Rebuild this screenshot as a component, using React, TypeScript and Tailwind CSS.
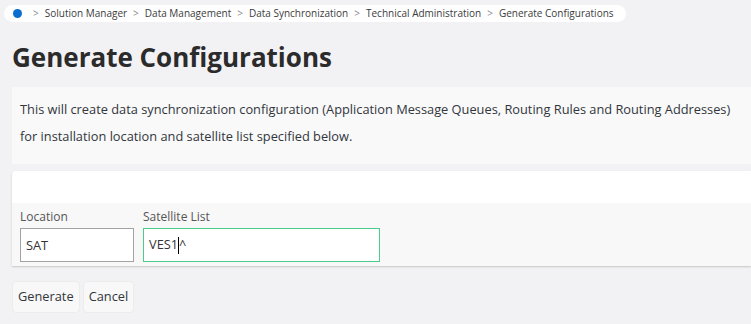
export default function App() {
  const crumbs = [
    "Solution Manager",
    "Data Management",
    "Data Synchronization",
    "Technical Administration",
    "Generate Configurations",
  ];

  return (
    <main className="h-[324px] w-[751px] overflow-hidden bg-[#f2f1f4] pl-[12px] font-['Open_Sans',sans-serif] text-[#32363a]">
      <nav className="ml-[-8px] mt-[5px] flex h-[17px] w-[622px] items-center whitespace-nowrap rounded-full bg-white pl-[9px] text-[10px] text-[#3b3b3b]">
        <span className="mr-[5px] h-[9px] w-[9px] shrink-0 rounded-full bg-[#0a6ed1]" />
        {crumbs.map((c) => (
          <span key={c} className="flex items-center">
            <span className="mx-[6px] text-[#8a8a8a]">&gt;</span>
            <span>{c}</span>
          </span>
        ))}
      </nav>

      <h1 className="mt-[19px] h-[46px] text-[26px] font-bold leading-[32px] text-[#2b2b2b]">
        Generate Configurations
      </h1>

      <section className="h-[77px] bg-[#f9f9fa] px-[8px] pt-[9px] text-[12.8px] leading-[27px]">
        <p>
          This will create data synchronization configuration (Application Message Queues, Routing Rules and Routing
          Addresses)
          <br />
          for installation location and satellite list specified below.
        </p>
      </section>

      <section className="mt-[7px] overflow-hidden rounded-tl-[4px] bg-white shadow-[0_1px_2px_rgba(0,0,0,0.18)]">
        <div className="h-[32px]" />
        <div className="flex h-[63px] gap-[9px] bg-[#f8f8f8] px-[8px] pt-[5px]">
          <div className="flex flex-col">
            <label className="text-[12px] leading-[17px] text-[#555]">Location</label>
            <input
              defaultValue="SAT"
              className="mt-[3px] h-[34px] w-[114px] border border-[#a3a3a3] bg-white px-[5px] text-[12.8px] text-[#333] outline-none"
            />
          </div>
          <div className="flex flex-col">
            <label className="text-[12px] leading-[17px] text-[#555]">Satellite List</label>
            <div className="mt-[3px] flex h-[34px] w-[237px] items-center border border-[#4ccb8a] bg-white px-[5px] text-[12.8px] text-[#333]">
              <span>VES1</span>
              <span className="h-[17px] w-[1px] bg-black" />
              <span>^</span>
            </div>
          </div>
        </div>
      </section>

      <div className="mt-[15px] flex gap-[3px] text-[12.8px]">
        <button className="h-[32px] rounded-[4px] border border-[#ececec] bg-[#f8f8f8] px-[5px] text-[#32363a]">
          Generate
        </button>
        <button className="h-[32px] rounded-[4px] border border-[#ececec] bg-[#f8f8f8] px-[5px] text-[#32363a]">
          Cancel
        </button>
      </div>
    </main>
  );
}
